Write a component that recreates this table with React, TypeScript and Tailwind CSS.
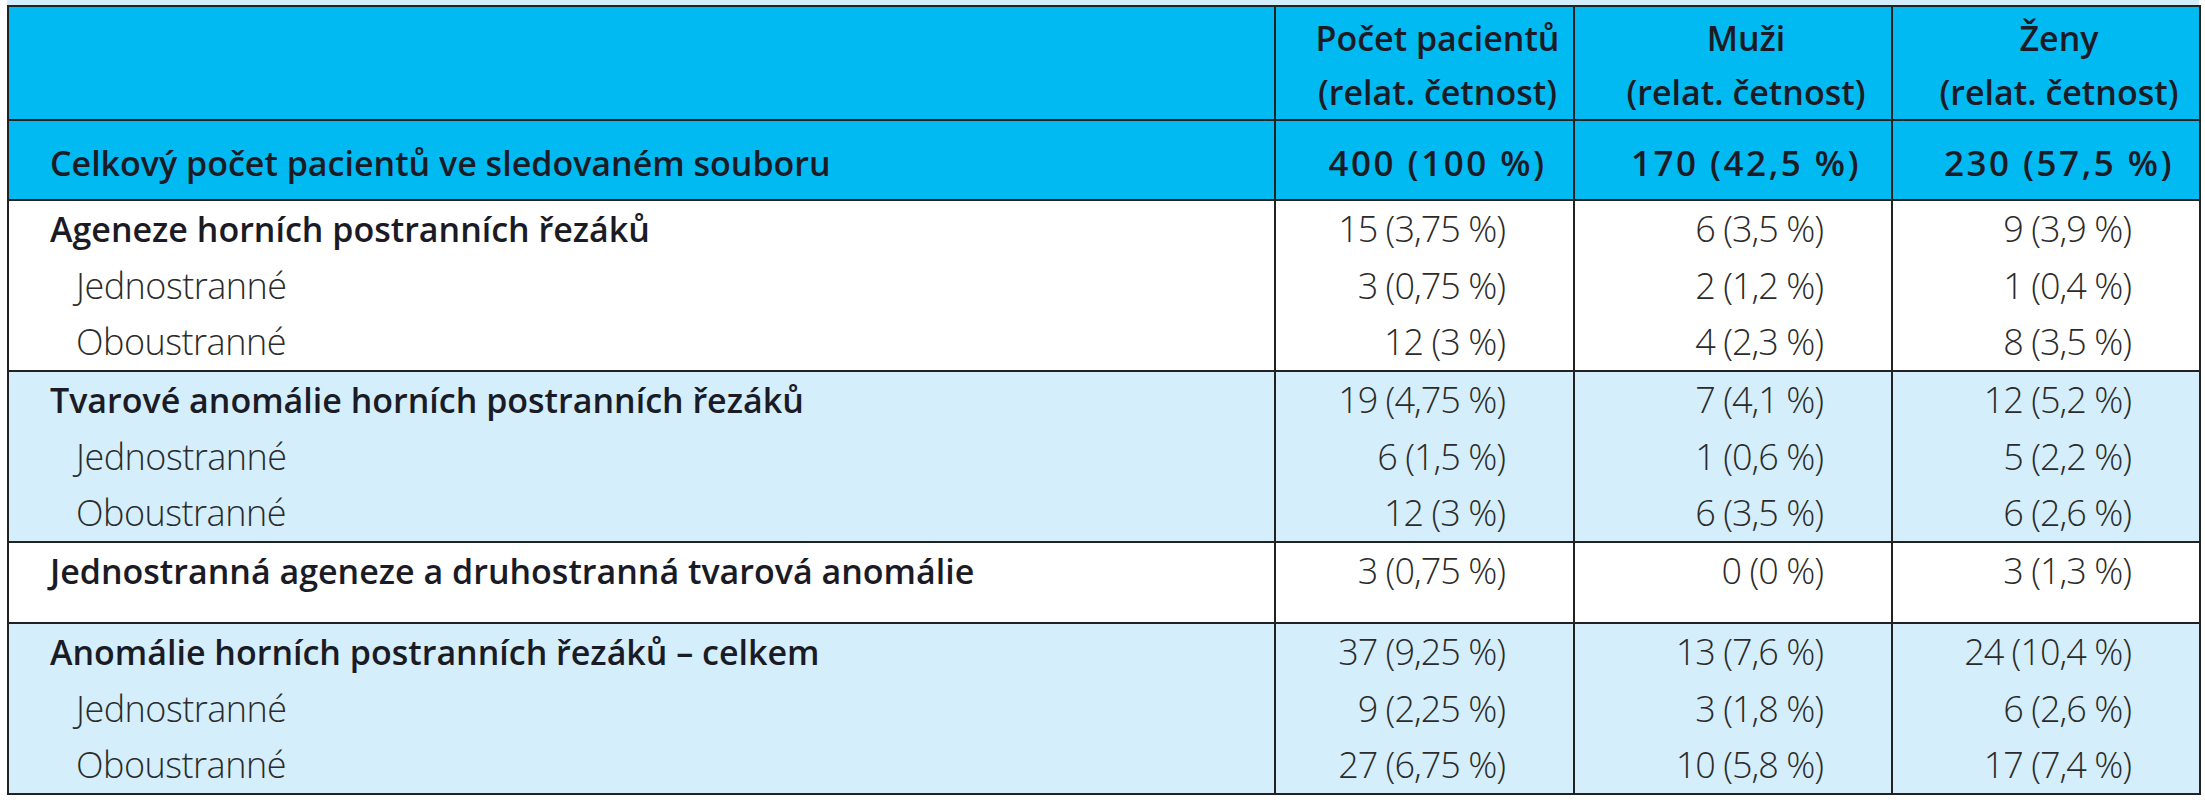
type Row = {
  label: string;
  bold?: boolean;
  values: [string, string, string];
};

type Group = {
  tint: boolean;
  rows: Row[];
  spacer?: boolean;
};

const groups: Group[] = [
  {
    tint: false,
    rows: [
      { label: 'Ageneze horních postranních řezáků', bold: true, values: ['15 (3,75 %)', '6 (3,5 %)', '9 (3,9 %)'] },
      { label: 'Jednostranné', values: ['3 (0,75 %)', '2 (1,2 %)', '1 (0,4 %)'] },
      { label: 'Oboustranné', values: ['12 (3 %)', '4 (2,3 %)', '8 (3,5 %)'] },
    ],
  },
  {
    tint: true,
    rows: [
      { label: 'Tvarové anomálie horních postranních řezáků', bold: true, values: ['19 (4,75 %)', '7 (4,1 %)', '12 (5,2 %)'] },
      { label: 'Jednostranné', values: ['6 (1,5 %)', '1 (0,6 %)', '5 (2,2 %)'] },
      { label: 'Oboustranné', values: ['12 (3 %)', '6 (3,5 %)', '6 (2,6 %)'] },
    ],
  },
  {
    tint: false,
    spacer: true,
    rows: [
      { label: 'Jednostranná ageneze a druhostranná tvarová anomálie', bold: true, values: ['3 (0,75 %)', '0 (0 %)', '3 (1,3 %)'] },
    ],
  },
  {
    tint: true,
    rows: [
      { label: 'Anomálie horních postranních řezáků – celkem', bold: true, values: ['37 (9,25 %)', '13 (7,6 %)', '24 (10,4 %)'] },
      { label: 'Jednostranné', values: ['9 (2,25 %)', '3 (1,8 %)', '6 (2,6 %)'] },
      { label: 'Oboustranné', values: ['27 (6,75 %)', '10 (5,8 %)', '17 (7,4 %)'] },
    ],
  },
];

const headers = ['Počet pacientů', 'Muži', 'Ženy'];
const totals = ['400 (100 %)', '170 (42,5 %)', '230 (57,5 %)'];

export default function App() {
  return (
    <div className="min-h-[800px] w-[2205px] bg-white font-['Open_Sans',sans-serif]">
      <div className="ml-[7px] w-[2192px]">
        <div className="h-[5px] bg-[#d3eefb]" />
        <table className="w-full table-fixed border-collapse border-2 border-[#222]">
          <colgroup>
            <col className="w-[1267px]" />
            <col className="w-[299px]" />
            <col className="w-[318px]" />
            <col className="w-[308px]" />
          </colgroup>
          <thead>
            <tr className="bg-[#00baf1] text-[34px] font-semibold text-[#1b1b26]">
              <th className="border-2 border-[#222]" />
              {headers.map((h) => (
                <th key={h} className="border-2 border-[#222] pl-[26px] pt-[4px] text-center align-top font-semibold leading-[54px]">
                  <div>{h}</div>
                  <div>(relat. četnost)</div>
                </th>
              ))}
            </tr>
          </thead>
          <tbody>
            <tr className="h-[80px] bg-[#00baf1] text-[34px] font-semibold text-[#1b1b26]">
              <td className="border-2 border-[#222] pl-[41px] pt-[6px]">Celkový počet pacientů ve sledovaném souboru</td>
              {totals.map((t) => (
                <td key={t} className="border-2 border-[#222] pl-[26px] pt-[6px] text-center text-[35px] tracking-[2.5px]">
                  {t}
                </td>
              ))}
            </tr>
          </tbody>
          {groups.map((g, gi) => (
            <tbody key={gi} className={`border-2 border-[#222] ${g.tint ? 'bg-[#d4eefb]' : 'bg-white'}`}>
              {g.rows.map((r) => (
                <tr key={r.label + r.values[0]} className="h-[57px]">
                  <td
                    className={
                      r.bold
                        ? 'pl-[41px] text-[34px] font-semibold text-[#1b1b26]'
                        : 'pl-[67px] text-[36px] font-light tracking-[-0.5px] text-[#2b2b2b]'
                    }
                  >
                    {r.label}
                  </td>
                  {r.values.map((v, i) => (
                    <td
                      key={i}
                      className="border-x-2 border-[#222] pr-[68px] text-right text-[36px] font-light tracking-[-1px] text-[#2b2b2b]"
                    >
                      {v}
                    </td>
                  ))}
                </tr>
              ))}
              {g.spacer && (
                <tr className="h-[24px]">
                  <td />
                  <td className="border-x-2 border-[#222]" />
                  <td className="border-x-2 border-[#222]" />
                  <td className="border-x-2 border-[#222]" />
                </tr>
              )}
            </tbody>
          ))}
        </table>
      </div>
    </div>
  );
}
